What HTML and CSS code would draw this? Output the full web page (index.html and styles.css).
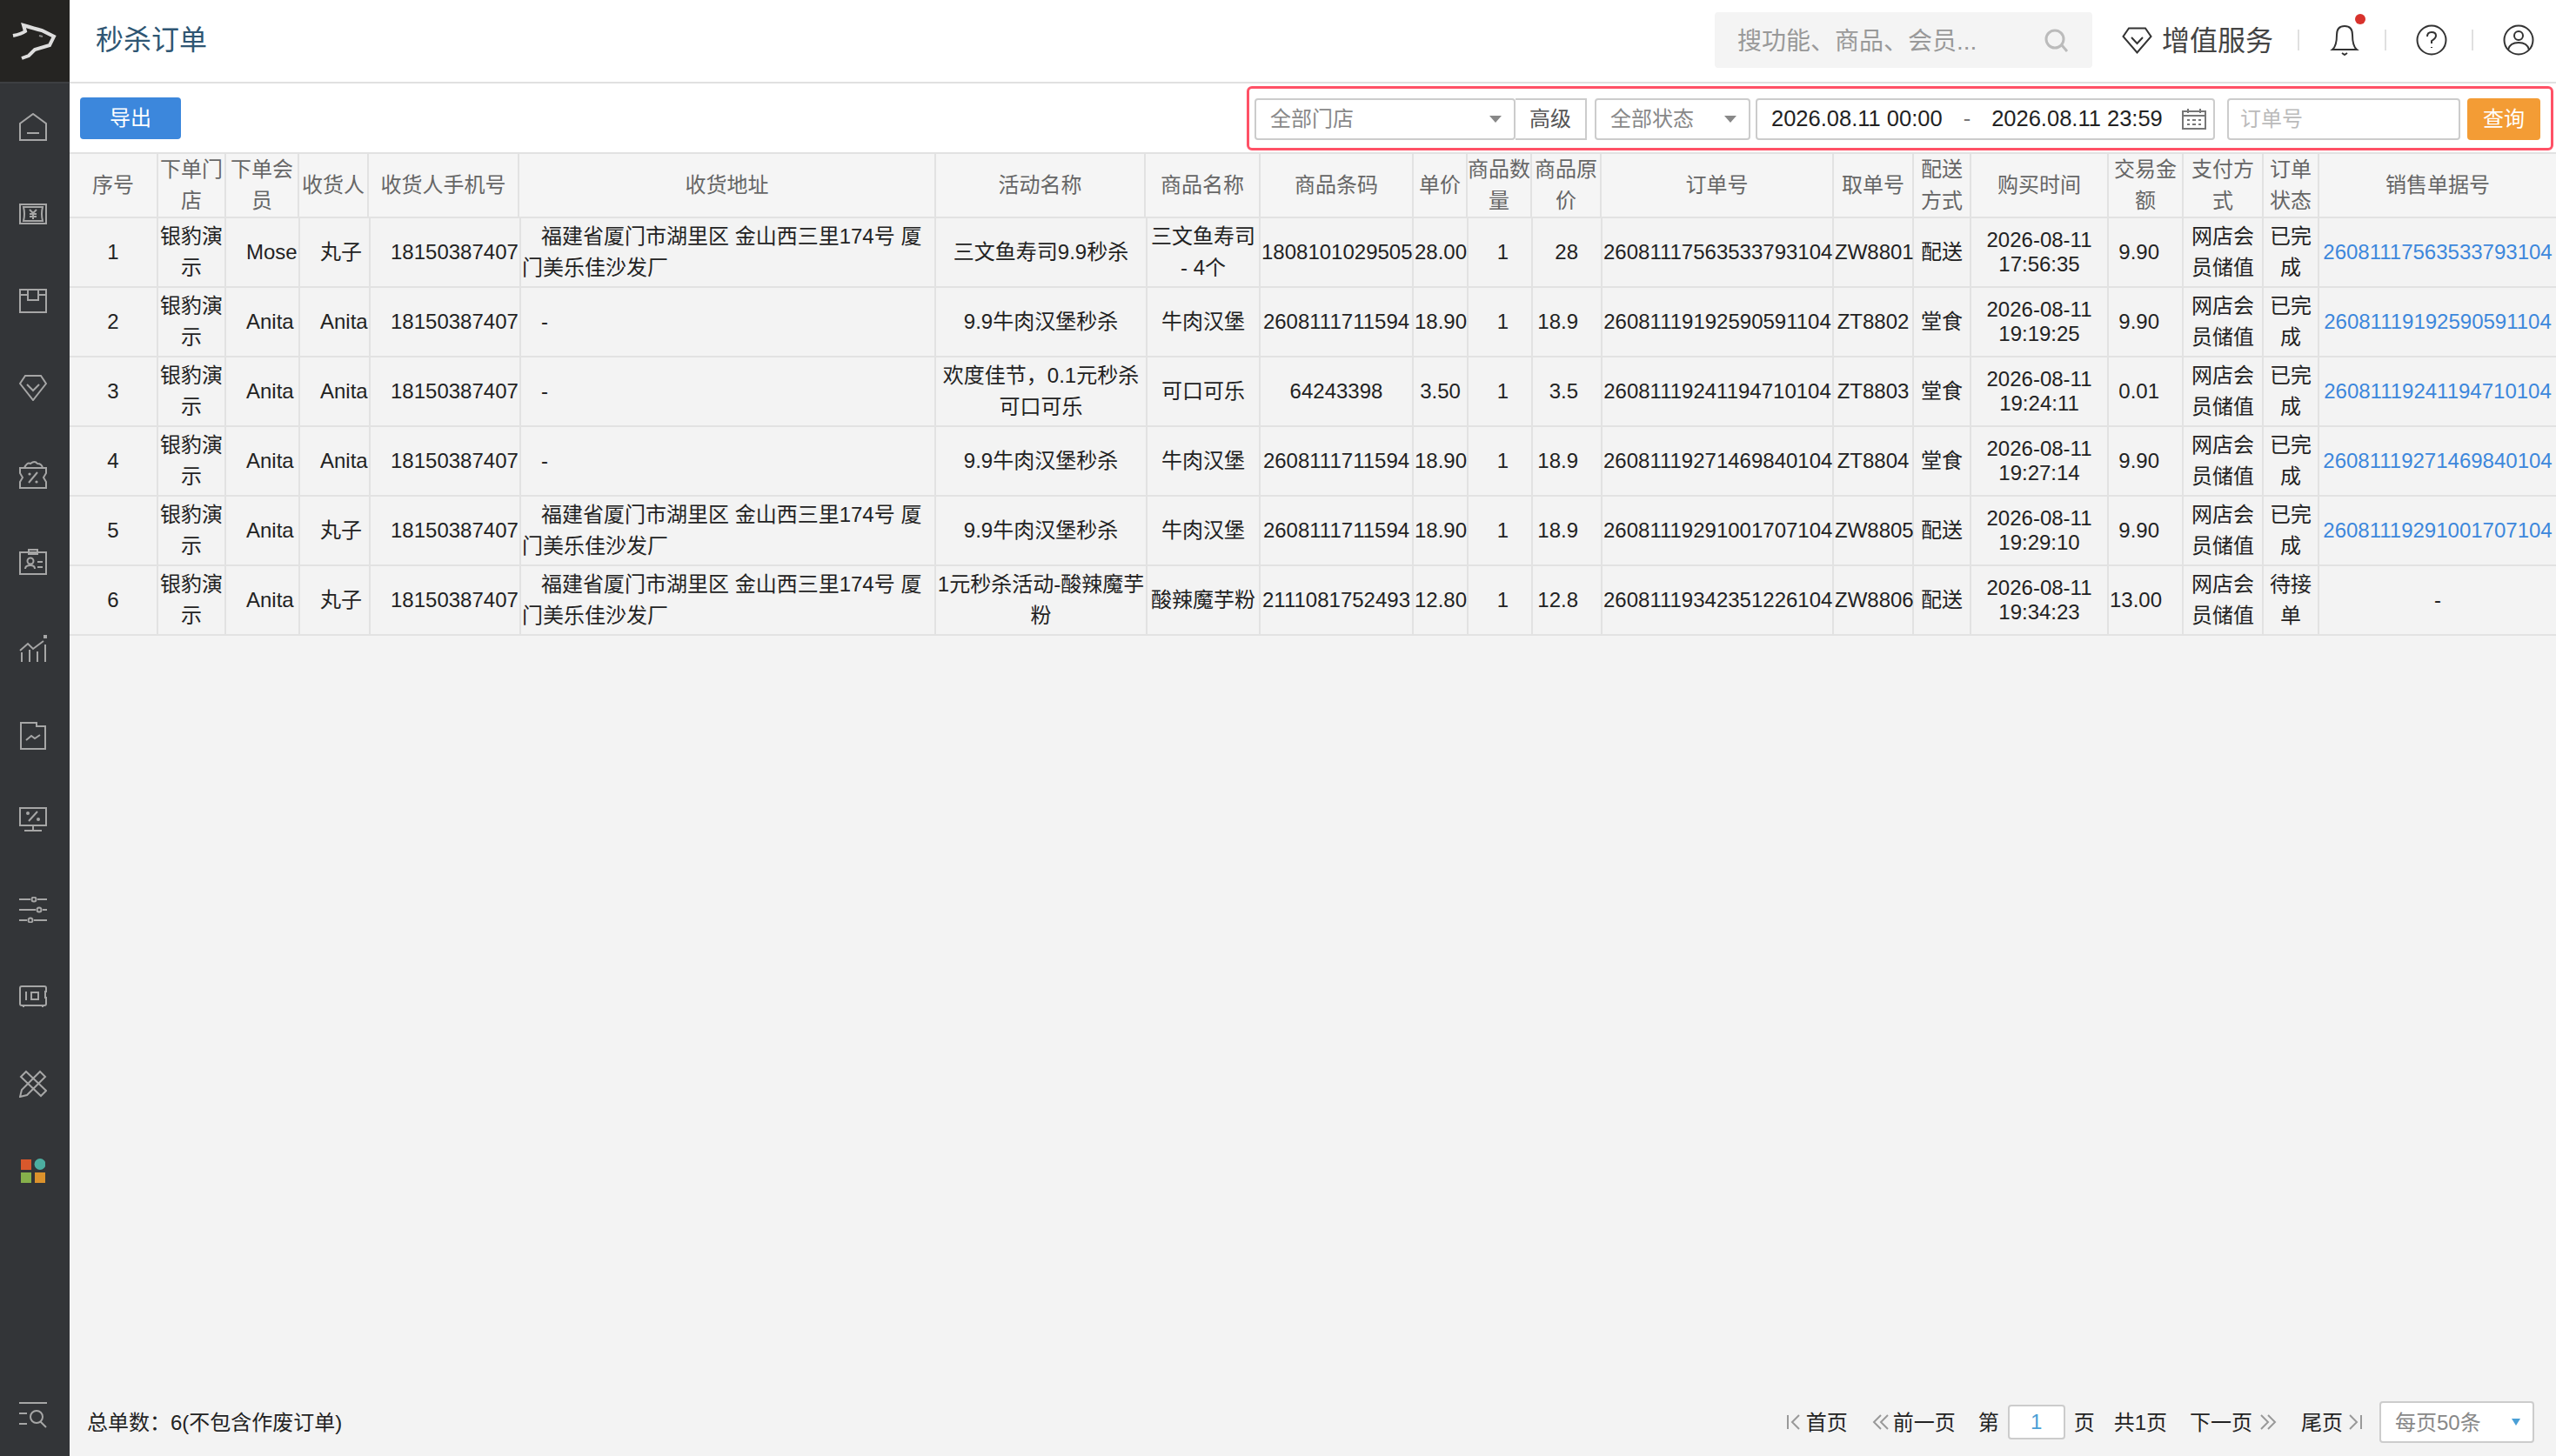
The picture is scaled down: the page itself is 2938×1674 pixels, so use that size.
FILE: index.html
```html
<!DOCTYPE html>
<html lang="zh-CN">
<head>
<meta charset="UTF-8">
<meta name="viewport" content="width=device-width, initial-scale=1.0">
<title>秒杀订单</title>
<link rel="stylesheet" href="styles.css">
</head>
<body>

<div id="wrapper">

<div class="sidebar">
    <div class="logo">
        <svg width="56" height="46" viewBox="0 0 56 46"><path d="M4 17 Q14 15 18 12 L16 5 Q29 9 37 11 L51 18 L46 28 L29 33 L22 40 L14 43"/><path d="M34 17 L38 18" class="logo-eye"/></svg>
    </div>
    <div class="nav-item">
        <svg width="32" height="32" viewBox="0 0 32 32"><path d="M1 31 V12 L16 1 L31 12 V31 Z M9 23 H23"/></svg>
    </div>
    <div class="nav-item">
        <svg width="32" height="24" viewBox="0 0 32 24"><path d="M1 1 H31 V23 H1 Z M5 4 H27 Q25 12 27 20 H5 Q7 12 5 4 Z"/><path d="M12 7 L16 11 L20 7 M16 11 V18 M12 12 H20 M12 15 H20"/></svg>
    </div>
    <div class="nav-item">
        <svg width="32" height="28" viewBox="0 0 32 28"><path d="M1 1 H31 V27 H1 Z M1 7 H10 M22 7 H31 M10 1 V13 H22 V1"/></svg>
    </div>
    <div class="nav-item">
        <svg width="32" height="30" viewBox="0 0 32 30"><path d="M7 1 H25 L31 10 L16 29 L1 10 Z M9 11 L16 18 L23 11"/></svg>
    </div>
    <div class="nav-item">
        <svg width="32" height="32" viewBox="0 0 32 32"><path d="M1 8 H31 V14 L28 19 L31 24 V31 H1 V24 L4 19 L1 14 Z M6 8 Q9 1 13 3 Q18 -1 21 3 Q26 3 27 8 M11 25 L21 13"/><circle cx="12" cy="15" r="1.6" class="solid"/><circle cx="20" cy="24" r="1.6" class="solid"/></svg>
    </div>
    <div class="nav-item">
        <svg width="32" height="30" viewBox="0 0 32 30"><path d="M1 4 H31 V29 H1 Z M11 1 H21 V6 H11 Z M7 23 Q7 19 13 19 Q18 19 18 23 M21 15 H27 M21 21 H27"/><circle cx="13" cy="14" r="3.5"/></svg>
    </div>
    <div class="nav-item">
        <svg width="32" height="32" viewBox="0 0 32 32"><path d="M1 18 L10 10 L16 16 L28 7 M3 31 V20 M12 31 V17 M21 31 V19 M30 31 V11"/><path d="M28 0 H32 V4 H28 Z" class="solid"/></svg>
    </div>
    <div class="nav-item">
        <svg class="icon-narrow" width="30" height="32" viewBox="0 0 30 32"><path d="M1 1 H19 V5 H29 V31 H1 Z M7 21 L13 16 L17 19 L23 15"/></svg>
    </div>
    <div class="nav-item">
        <svg class="icon-raised" width="32" height="28" viewBox="0 0 32 28"><path d="M1 1 H31 V21 H1 Z M16 21 V26 M6 27 H26 M11 16 L21 5"/><circle cx="10" cy="7" r="2" class="solid"/><circle cx="22" cy="14" r="2" class="solid"/></svg>
    </div>
    <div class="nav-item">
        <svg width="32" height="30" viewBox="0 0 32 30"><path d="M0 3 H13 M21 3 H32 M0 15 H19 M27 15 H32 M0 27 H9 M17 27 H32"/><circle cx="17" cy="3" r="2.5"/><circle cx="23" cy="15" r="2.5"/><circle cx="13" cy="27" r="2.5"/></svg>
    </div>
    <div class="nav-item">
        <svg width="32" height="26" viewBox="0 0 32 26"><path d="M3 1 H29 Q31 1 31 3 V7 H30 V14 H31 V21 Q31 23 29 23 H3 Q1 23 1 21 V3 Q1 1 3 1 Z M8 7 V17 M5 23 V25 M27 23 V25 M14 8 H22 V16 H14 Z"/></svg>
    </div>
    <div class="nav-item">
        <svg width="32" height="32" viewBox="0 0 32 32"><path d="M8 2 L31 24 L25 30 L2 8 Z M24 2 L30 8 L9 29 L1 31 L3 23 Z"/></svg>
    </div>
    <div class="nav-item">
        <svg class="icon-apps" width="28" height="28" viewBox="0 0 28 28">
            <rect x="0" y="1" width="12" height="12" fill="#d9582c"/>
            <circle cx="22" cy="6.5" r="6.5" fill="#4caea0"/>
            <rect x="0" y="16" width="12" height="12" fill="#86b04b"/>
            <rect x="16" y="16" width="12" height="12" fill="#dc922c"/>
        </svg>
    </div>
    <div class="nav-item nav-bottom">
        <svg width="32" height="30" viewBox="0 0 32 30"><path d="M0 1 H32 M0 13 H9 M0 25 H9 M24 22 L31 29"/><circle cx="20" cy="17" r="7"/></svg>
    </div>
</div>

<div class="main">

    <div class="topbar">
        <div class="page-title">秒杀订单</div>
        <div class="search-box">
            <span>搜功能、商品、会员...</span>
            <svg width="30" height="28" viewBox="0 0 30 28"><circle cx="13" cy="13" r="10"/><path d="M21 20 L27 27"/></svg>
        </div>
        <div class="vip">
            <svg width="35" height="31" viewBox="0 0 35 31"><path d="M8 1.5 H27 L33.5 11 L17.5 29.5 L1.5 11 Z M11 12 L17.5 19 L24 12"/></svg>
            <span>增值服务</span>
        </div>
        <div class="top-sep"></div>
        <div class="top-icon bell">
            <svg width="36" height="36" viewBox="0 0 36 36"><path d="M4 29 Q9 25 9 12 Q9 2 18 2 Q27 2 27 12 Q27 25 32 29 Z M15 33 L18 35 L21 33"/></svg>
            <span class="bell-dot"></span>
        </div>
        <div class="top-sep"></div>
        <div class="top-icon">
            <svg width="36" height="36" viewBox="0 0 36 36"><circle cx="18" cy="18" r="16.5"/><path d="M13 14 Q13 9 18 9 Q23 9 23 13 Q23 16 18 19 V22 M18 26 V27"/></svg>
        </div>
        <div class="top-sep"></div>
        <div class="top-icon">
            <svg width="36" height="36" viewBox="0 0 36 36"><circle cx="18" cy="18" r="16.5"/><circle cx="18" cy="13" r="5"/><path d="M6 29 Q8 21 18 21 Q28 21 30 29"/></svg>
        </div>
    </div>

    <div class="toolbar">
        <button class="btn-export">导出</button>
        <div class="filters">
            <div class="select select-store"><span>全部门店</span><i class="caret"></i></div>
            <div class="btn-advanced">高级</div>
            <div class="select select-status"><span>全部状态</span><i class="caret"></i></div>
            <div class="date-range">
                <span>2026.08.11 00:00</span>
                <span class="date-dash">-</span>
                <span>2026.08.11 23:59</span>
                <svg width="28" height="24" viewBox="0 0 28 24"><path d="M1 3 H27 V23 H1 Z M1 8 H27 M7 0 V5 M21 0 V5 M6 13 H9 M12 13 H16 M19 13 H22 M6 18 H9 M12 18 H16 M19 18 H22"/></svg>
            </div>
            <div class="order-input">订单号</div>
            <button class="btn-query">查询</button>
        </div>
    </div>

    <table class="grid grid-head">
        <colgroup><col class="h1"><col class="h2"><col class="h3"><col class="h4"><col class="h5"><col class="h6"><col class="h7"><col class="h8"><col class="h9"><col class="h10"><col class="h11"><col class="h12"><col class="h13"><col class="h14"><col class="h15"><col class="h16"><col class="h17"><col class="h18"><col class="h19"><col class="h20"></colgroup>
        <tr>
            <th>序号</th><th>下单门店</th><th>下单会员</th><th>收货人</th><th>收货人手机号</th><th>收货地址</th><th>活动名称</th><th>商品名称</th><th>商品条码</th><th>单价</th><th>商品数量</th><th>商品原价</th><th>订单号</th><th>取单号</th><th>配送方式</th><th>购买时间</th><th>交易金额</th><th>支付方式</th><th>订单状态</th><th>销售单据号</th>
        </tr>
    </table>

    <table class="grid grid-body">
        <colgroup><col class="b1"><col class="b2"><col class="b3"><col class="b4"><col class="b5"><col class="b6"><col class="b7"><col class="b8"><col class="b9"><col class="b10"><col class="b11"><col class="b12"><col class="b13"><col class="b14"><col class="b15"><col class="b16"><col class="b17"><col class="b18"><col class="b19"><col class="b20"></colgroup>
        <tr>
            <td>1</td><td>银豹演示</td><td class="indent">Mose</td><td class="indent">丸子</td><td class="indent">18150387407</td>
            <td class="addr">福建省厦门市湖里区 金山西三里174号 厦门美乐佳沙发厂</td>
            <td>三文鱼寿司9.9秒杀</td><td>三文鱼寿司 - 4个</td><td>1808101029505</td><td>28.00</td>
            <td class="num">1</td><td class="num">28</td><td>26081117563533793104</td><td>ZW8801</td><td>配送</td>
            <td class="time">2026-08-11 17:56:35</td><td class="num">9.90</td><td>网店会员储值</td><td>已完成</td><td class="link">26081117563533793104</td>
        </tr>
        <tr>
            <td>2</td><td>银豹演示</td><td class="indent">Anita</td><td class="indent">Anita</td><td class="indent">18150387407</td>
            <td class="addr">-</td>
            <td>9.9牛肉汉堡秒杀</td><td>牛肉汉堡</td><td>2608111711594</td><td>18.90</td>
            <td class="num">1</td><td class="num">18.9</td><td>26081119192590591104</td><td>ZT8802</td><td>堂食</td>
            <td class="time">2026-08-11 19:19:25</td><td class="num">9.90</td><td>网店会员储值</td><td>已完成</td><td class="link">26081119192590591104</td>
        </tr>
        <tr>
            <td>3</td><td>银豹演示</td><td class="indent">Anita</td><td class="indent">Anita</td><td class="indent">18150387407</td>
            <td class="addr">-</td>
            <td>欢度佳节，0.1元秒杀可口可乐</td><td>可口可乐</td><td>64243398</td><td>3.50</td>
            <td class="num">1</td><td class="num">3.5</td><td>26081119241194710104</td><td>ZT8803</td><td>堂食</td>
            <td class="time">2026-08-11 19:24:11</td><td class="num">0.01</td><td>网店会员储值</td><td>已完成</td><td class="link">26081119241194710104</td>
        </tr>
        <tr>
            <td>4</td><td>银豹演示</td><td class="indent">Anita</td><td class="indent">Anita</td><td class="indent">18150387407</td>
            <td class="addr">-</td>
            <td>9.9牛肉汉堡秒杀</td><td>牛肉汉堡</td><td>2608111711594</td><td>18.90</td>
            <td class="num">1</td><td class="num">18.9</td><td>26081119271469840104</td><td>ZT8804</td><td>堂食</td>
            <td class="time">2026-08-11 19:27:14</td><td class="num">9.90</td><td>网店会员储值</td><td>已完成</td><td class="link">26081119271469840104</td>
        </tr>
        <tr>
            <td>5</td><td>银豹演示</td><td class="indent">Anita</td><td class="indent">丸子</td><td class="indent">18150387407</td>
            <td class="addr">福建省厦门市湖里区 金山西三里174号 厦门美乐佳沙发厂</td>
            <td>9.9牛肉汉堡秒杀</td><td>牛肉汉堡</td><td>2608111711594</td><td>18.90</td>
            <td class="num">1</td><td class="num">18.9</td><td>26081119291001707104</td><td>ZW8805</td><td>配送</td>
            <td class="time">2026-08-11 19:29:10</td><td class="num">9.90</td><td>网店会员储值</td><td>已完成</td><td class="link">26081119291001707104</td>
        </tr>
        <tr>
            <td>6</td><td>银豹演示</td><td class="indent">Anita</td><td class="indent">丸子</td><td class="indent">18150387407</td>
            <td class="addr">福建省厦门市湖里区 金山西三里174号 厦门美乐佳沙发厂</td>
            <td>1元秒杀活动-酸辣魔芋粉</td><td>酸辣魔芋粉</td><td>2111081752493</td><td>12.80</td>
            <td class="num">1</td><td class="num">12.8</td><td>26081119342351226104</td><td>ZW8806</td><td>配送</td>
            <td class="time">2026-08-11 19:34:23</td><td class="num">13.00</td><td>网店会员储值</td><td>待接单</td><td>-</td>
        </tr>
    </table>

    <div class="footer">
        <div class="total">总单数：6(不包含作废订单)</div>
        <div class="pager">
            <svg class="pg-first" width="16" height="20" viewBox="0 0 16 20"><path d="M1 2 V18 M14 2 L6 10 L14 18"/></svg>
            <span class="pg-label">首页</span>
            <svg class="pg-prev" width="22" height="20" viewBox="0 0 22 20"><path d="M12 2 L4 10 L12 18 M20 2 L12 10 L20 18"/></svg>
            <span class="pg-label">前一页</span>
            <span class="pg-di">第</span>
            <div class="page-input">1</div>
            <span class="pg-ye">页</span>
            <span class="pg-total">共1页</span>
            <span class="pg-label">下一页</span>
            <svg class="pg-next" width="22" height="20" viewBox="0 0 22 20"><path d="M2 2 L10 10 L2 18 M10 2 L18 10 L10 18"/></svg>
            <span class="pg-label pg-last">尾页</span>
            <svg class="pg-end" width="16" height="20" viewBox="0 0 16 20"><path d="M15 2 V18 M2 2 L10 10 L2 18"/></svg>
            <div class="select select-size"><span>每页50条</span><i class="caret caret-blue"></i></div>
        </div>
    </div>

</div>

</div>

</body>
</html>
```
FILE: styles.css
```css
html {
    box-sizing: border-box;
}

*, *:before, *:after {
    box-sizing: inherit;
}

body {
    margin: 0;
    background: #f3f3f3;
    color: #222;
    font: 24px 'Liberation Sans', 'Noto Sans CJK SC', sans-serif;
    overflow: hidden;
}

button {
    border: none;
    padding: 0 0 4px;
    font: inherit;
    color: #fff;
}

#wrapper {
    height: 100vh;
    display: flex;
}

/* sidebar */

.sidebar {
    width: 80px;
    flex: none;
    background: #333538;
    display: flex;
    flex-direction: column;
}

.logo {
    height: 96px;
    flex: none;
    background: #252422;
    border-bottom: 2px solid #3d3f42;
    display: flex;
    align-items: center;
    padding-left: 11px;
}

.logo svg {
    fill: none;
    stroke: #dedede;
    stroke-width: 4;
}

.logo .logo-eye {
    stroke: #888;
    stroke-width: 2;
}

.nav-item {
    height: 100px;
    flex: none;
    display: flex;
    align-items: center;
    padding-left: 22px;
}

.nav-item svg {
    fill: none;
    stroke: #a6a6a6;
    stroke-width: 2;
}

.nav-item svg rect,
.nav-item svg circle[fill] {
    stroke: none;
}

.nav-item svg .solid {
    fill: #a6a6a6;
    stroke: none;
}

.nav-item .icon-narrow {
    margin-left: 1px;
}

.nav-item .icon-raised {
    margin-bottom: 8px;
}

.nav-item .icon-apps {
    margin-left: 2px;
}

.nav-bottom {
    margin-top: auto;
    height: 94px;
}

/* main column */

.main {
    flex: 1;
    min-width: 0;
    display: flex;
    flex-direction: column;
}

.topbar {
    height: 96px;
    flex: none;
    background: #fff;
    border-bottom: 2px solid #e0e0e0;
    display: flex;
    align-items: center;
    padding: 0 25px 2px 0;
    color: #444;
}

.page-title {
    margin-left: 30px;
    padding-bottom: 6px;
    font-size: 32px;
    color: #2f5673;
    margin-right: auto;
}

.search-box {
    width: 434px;
    height: 64px;
    background: #f4f4f4;
    border-radius: 4px;
    padding: 0 26px;
    font-size: 28px;
    color: #999;
    display: flex;
    align-items: center;
    justify-content: space-between;
}

.search-box span {
    padding-bottom: 2px;
}

.search-box svg {
    fill: none;
    stroke: #bbb;
    stroke-width: 3;
}

.vip {
    margin-left: 34px;
    font-size: 32px;
    display: flex;
    align-items: center;
    gap: 11px;
}

.vip span {
    padding-bottom: 4px;
}

.vip svg,
.top-icon svg {
    fill: none;
    stroke: #333;
    stroke-width: 2;
}

.top-sep {
    width: 2px;
    height: 24px;
    background: #e0e0e0;
    margin: 0 34px 0 28px;
}

.top-icon {
    position: relative;
    display: flex;
}

.bell-dot {
    position: absolute;
    top: -12px;
    right: -6px;
    width: 12px;
    height: 12px;
    border-radius: 50%;
    background: #d8322c;
}

/* toolbar */

.toolbar {
    height: 79px;
    flex: none;
    background: #fff;
    display: flex;
    align-items: center;
    justify-content: space-between;
    padding-left: 12px;
}

.btn-export {
    width: 116px;
    height: 48px;
    background: #3c87dc;
    border-radius: 4px;
}

.filters {
    width: 1502px;
    height: 74px;
    margin-right: 3px;
    border: 3px solid #ff5166;
    border-radius: 6px;
    display: flex;
    align-items: center;
    padding: 2px 0 0 6px;
}

.select {
    height: 48px;
    border: 2px solid #ccc;
    border-radius: 4px;
    background: #fff;
    color: #888;
    display: flex;
    align-items: center;
    justify-content: space-between;
    padding: 0 14px 0 16px;
}

.select span {
    padding-bottom: 4px;
}

.select-store {
    width: 300px;
}

.select-status {
    width: 179px;
    margin-left: 9px;
}

.select-size {
    width: 178px;
    margin-left: 20px;
    padding-right: 14px;
}

.caret {
    width: 0;
    height: 0;
    border-left: 7px solid transparent;
    border-right: 7px solid transparent;
    border-top: 8px solid #888;
}

.caret-blue {
    border-left-width: 5px;
    border-right-width: 5px;
    border-top-color: #4a9fd6;
}

.btn-advanced {
    width: 82px;
    height: 48px;
    padding-bottom: 4px;
    border: 2px solid #ccc;
    border-left: none;
    background: #fff;
    color: #555;
    display: flex;
    align-items: center;
    justify-content: center;
}

.date-range {
    width: 528px;
    height: 48px;
    margin-left: 6px;
    border: 2px solid #ccc;
    border-radius: 4px;
    font-size: 25.5px;
    display: flex;
    align-items: center;
    padding-left: 16px;
}

.date-dash {
    margin: 0 24px 0 24px;
    color: #777;
}

.date-range svg {
    margin-left: 22px;
    fill: none;
    stroke: #777;
    stroke-width: 2;
}

.order-input {
    width: 268px;
    height: 48px;
    margin-left: 14px;
    padding: 0 0 4px 13px;
    border: 2px solid #ccc;
    border-radius: 4px;
    color: #bbb;
    display: flex;
    align-items: center;
}

.btn-query {
    width: 84px;
    height: 48px;
    margin-left: 8px;
    background: #f39c35;
    border-radius: 4px;
}

/* table */

.grid {
    table-layout: fixed;
    border-collapse: separate;
    border-spacing: 0;
    width: 2858px;
    flex: none;
    text-align: center;
    line-height: 36px;
}

.grid th,
.grid td {
    padding: 0;
    overflow: visible;
    border-right: 2px solid #e2e2e2;
    border-bottom: 2px solid #e2e2e2;
    font-weight: normal;
}

.grid th:last-child,
.grid td:last-child {
    border-right: none;
}

.grid-head {
    background: #f5f5f5;
    color: #666;
    border-top: 2px solid #e2e2e2;
}

.grid-head tr {
    height: 74px;
}

.grid-body tr {
    height: 80px;
}

.grid-body td {
    padding: 0 1px;
    white-space: normal;
}

.grid-body .indent {
    text-align: left;
    text-indent: 23px;
    white-space: nowrap;
    padding: 0;
}

.grid-body .addr {
    text-align: left;
    text-indent: 22px;
}

.grid-body .num {
    text-align: right;
    padding-right: 26px;
}

.grid-body .time {
    line-height: 28px;
    padding: 0 16px;
}

.grid-body .link {
    color: #3c87dc;
    white-space: nowrap;
}

.h1, .b1 { width: 102px; }
.h2, .b2 { width: 78px; }
.h3 { width: 84px; }
.b3 { width: 85px; }
.h4 { width: 80px; }
.b4 { width: 81px; }
.h5, .b5 { width: 173px; }
.h6 { width: 479px; }
.b6 { width: 477px; }
.h7 { width: 241px; }
.b7 { width: 243px; }
.h8 { width: 132px; }
.b8 { width: 130px; }
.h9, .b9 { width: 176px; }
.h10 { width: 62px; }
.b10 { width: 63px; }
.h11, .b11 { width: 74px; }
.h12, .b12 { width: 80px; }
.h13 { width: 267px; }
.b13 { width: 266px; }
.h14, .b14 { width: 92px; }
.h15, .b15 { width: 66px; }
.h16, .b16 { width: 158px; }
.h17, .b17 { width: 86px; }
.h18, .b18 { width: 92px; }
.h19, .b19 { width: 64px; }
.h20, .b20 { width: 272px; }

/* footer */

.footer {
    margin-top: auto;
    height: 76px;
    flex: none;
    display: flex;
    align-items: center;
    justify-content: space-between;
    padding: 0 25px 2px 20px;
}

.total {
    padding-bottom: 4px;
}

.pager {
    display: flex;
    align-items: center;
    color: #222;
}

.pager span {
    padding-bottom: 4px;
}

.pager svg {
    fill: none;
    stroke: #999;
    stroke-width: 2;
}

.pg-first {
    margin-right: 6px;
}

.pg-prev {
    margin-left: 26px;
    margin-right: 4px;
}

.pg-di {
    margin-left: 26px;
}

.page-input {
    width: 66px;
    height: 40px;
    margin: 0 10px;
    border: 2px solid #ccc;
    border-radius: 4px;
    background: #fff;
    color: #4a9fd6;
    display: flex;
    align-items: center;
    justify-content: center;
}

.pg-total {
    margin: 0 26px 0 22px;
}

.pg-next {
    margin-left: 8px;
}

.pg-last {
    margin-left: 26px;
}

.pg-end {
    margin-left: 6px;
}
```
